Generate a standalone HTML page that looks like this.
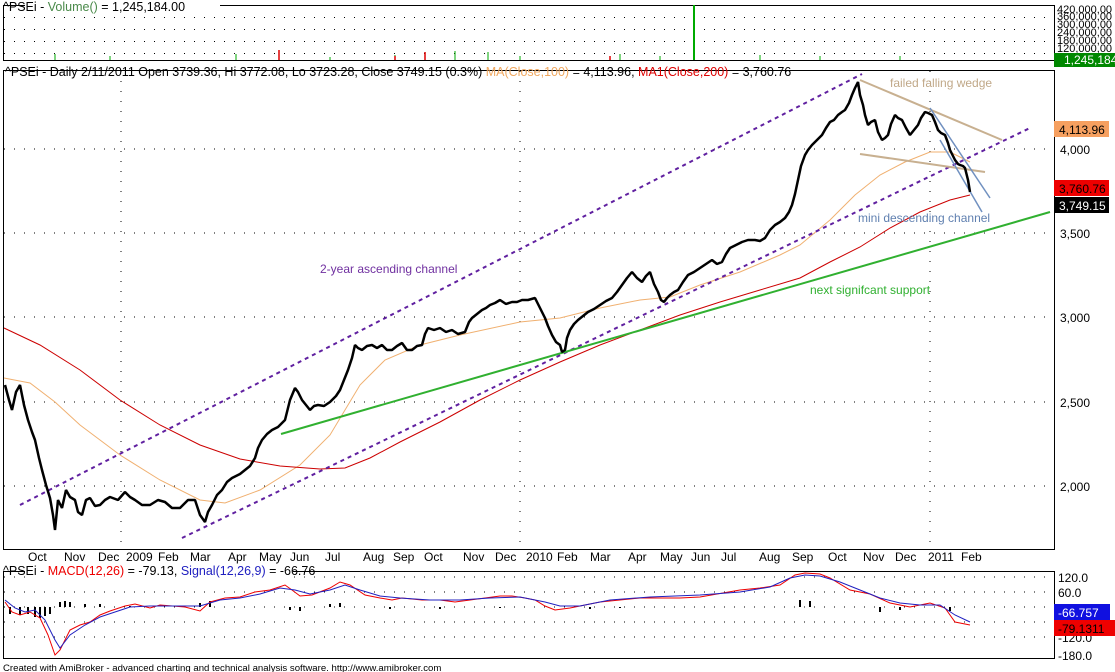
<!DOCTYPE html>
<html><head><meta charset="utf-8"><style>
html,body{margin:0;padding:0;background:#fff;}
body{width:1115px;height:672px;overflow:hidden;position:relative;font-family:"Liberation Sans",Arial,sans-serif;}
svg{position:absolute;left:0;top:0;}
text{font-family:"Liberation Sans",Arial,sans-serif;font-size:12px;}
</style></head><body>
<svg width="1115" height="672" viewBox="0 0 1115 672">
<defs>
<pattern id="dots" width="10" height="12" patternUnits="userSpaceOnUse"><rect x="4" y="5" width="1" height="1" fill="#000"/></pattern>
</defs>
<rect x="3" y="5" width="1051" height="55" fill="url(#dots)"/>
<rect x="3.5" y="5.5" width="1051" height="55" fill="none" stroke="#000"/>
<g stroke="#0a0" stroke-width="1">
<line x1="55" y1="60" x2="55" y2="54"/><line x1="110" y1="60" x2="110" y2="56"/><line x1="236" y1="60" x2="236" y2="54"/><line x1="330" y1="60" x2="330" y2="57"/><line x1="395" y1="60" x2="395" y2="55"/><line x1="455" y1="60" x2="455" y2="51"/><line x1="488" y1="60" x2="488" y2="52"/><line x1="520" y1="60" x2="520" y2="56"/><line x1="620" y1="60" x2="620" y2="54"/><line x1="660" y1="60" x2="660" y2="56"/><line x1="760" y1="60" x2="760" y2="55"/><line x1="820" y1="60" x2="820" y2="56"/><line x1="900" y1="60" x2="900" y2="56"/>
</g>
<line x1="694" y1="60" x2="694" y2="5" stroke="#0a0" stroke-width="2"/>
<g stroke="#d00" stroke-width="1.5"><line x1="279" y1="60" x2="279" y2="50"/><line x1="425" y1="60" x2="425" y2="52"/><line x1="395" y1="60" x2="395" y2="56"/><line x1="610" y1="60" x2="610" y2="56"/></g>
<rect x="25" y="0" width="195" height="12" fill="#fff"/>
<text x="3" y="11" fill="#000" style="font-size:12.5px">^PSEi - <tspan fill="#4a8a4a">Volume()</tspan> = 1,245,184.00</text>
<g><text x="1057" y="13" style="font-size:11px">420,000,00</text><text x="1057" y="20" style="font-size:11px">360,000,00</text><text x="1057" y="28" style="font-size:11px">300,000,00</text><text x="1057" y="36" style="font-size:11px">240,000,00</text><text x="1057" y="44" style="font-size:11px">180,000,00</text><text x="1057" y="52" style="font-size:11px">120,000,00</text></g>
<rect x="1054" y="53" width="61" height="14" fill="#080"/>
<text x="1064" y="64" fill="#fff" style="font-size:12px">1,245,184</text>

<rect x="3.5" y="70.5" width="1051" height="479" fill="none" stroke="#000"/>
<g stroke="#000" stroke-dasharray="1,9" stroke-width="1">
<line x1="4" y1="149" x2="1054" y2="149"/><line x1="4" y1="233" x2="1054" y2="233"/><line x1="4" y1="317" x2="1054" y2="317"/><line x1="4" y1="402" x2="1054" y2="402"/><line x1="4" y1="486" x2="1054" y2="486"/>
</g>
<g stroke="#000" stroke-dasharray="1,9"><line x1="121" y1="71" x2="121" y2="549"/><line x1="520" y1="71" x2="520" y2="549"/><line x1="930" y1="71" x2="930" y2="549"/></g>
<text x="5" y="76" fill="#000" style="font-size:12.5px">^PSEi - Daily 2/11/2011 Open 3739.36, Hi 3772.08, Lo 3723.28, Close 3749.15 (0.3%) <tspan fill="#f0a860">MA(Close,100)</tspan> = 4,113.96, <tspan fill="#d00">MA1(Close,200)</tspan> = 3,760.76</text>
<polyline fill="none" stroke="#f0b070" stroke-width="1" points="4,378 30,383 55,402 80,425 120,455 160,480 200,500 225,503 260,490 300,465 330,435 360,385 385,360 420,345 460,335 520,322 560,318 600,308 640,300 670,297 700,285 740,272 780,255 800,245 830,220 855,195 880,175 905,162 930,152 950,152 970,162"/>
<polyline fill="none" stroke="#c00" stroke-width="1" points="4,328 40,345 80,370 120,400 160,425 200,445 240,459 280,466 320,469 345,468 370,458 400,442 440,422 480,400 520,380 560,362 600,345 640,330 680,315 720,302 760,290 800,278 830,262 860,247 890,228 920,212 950,200 970,195"/>
<g stroke="#6020a0" stroke-width="2" stroke-dasharray="4,4">
<line x1="20" y1="505" x2="862" y2="74"/>
<line x1="182" y1="538" x2="1030" y2="128"/>
</g>
<line x1="281" y1="434" x2="1050" y2="212" stroke="#30b030" stroke-width="2"/>
<g stroke="#c8b090" stroke-width="2"><line x1="860" y1="80" x2="1002" y2="140"/><line x1="860" y1="154" x2="985" y2="172"/></g>
<g stroke="#7090c0" stroke-width="1.5"><line x1="930" y1="108" x2="990" y2="198"/><line x1="940" y1="140" x2="982" y2="212"/></g>
<polyline fill="none" stroke="#000" stroke-width="2.5" stroke-linejoin="bevel" points="5,385 9,400 12,410 16,392 20,385 24,405 28,420 32,432 35,440 39,458 42,470 46,485 50,498 53,515 55,530 58,500 62,508 66,490 70,497 75,500 78,512 82,515 86,500 90,498 95,506 100,505 105,500 110,497 118,500 125,492 130,497 135,500 142,505 150,505 158,500 165,502 172,508 180,508 188,500 195,500 200,515 205,522 208,512 212,505 217,495 222,490 227,482 232,478 240,474 245,470 250,466 255,458 258,448 262,440 267,434 272,430 278,427 285,420 290,400 295,388 298,392 302,400 306,405 310,410 314,406 318,405 324,406 330,402 336,396 340,390 344,380 348,370 352,358 355,345 358,348 362,350 367,346 372,345 377,348 382,345 387,350 392,350 397,346 402,343 407,350 412,350 417,346 422,345 425,334 428,328 434,330 440,328 446,332 452,330 458,334 465,332 469,322 472,318 477,314 482,310 486,308 490,305 495,303 500,300 506,304 512,302 517,302 522,300 528,300 535,298 540,308 545,318 548,326 552,335 556,342 560,345 562,352 565,350 567,338 570,330 574,324 578,320 583,316 588,312 594,309 600,305 606,301 612,298 617,292 622,285 627,278 632,272 637,278 642,282 646,276 650,272 654,284 658,292 661,300 664,302 667,298 670,295 674,292 678,290 683,282 688,275 694,272 700,268 706,264 712,260 717,264 722,262 726,254 730,248 736,245 742,242 748,240 755,240 760,241 765,238 770,230 775,225 780,222 785,218 789,212 792,205 795,194 798,180 801,166 805,155 808,150 812,145 817,140 822,135 826,128 830,122 834,120 838,115 842,112 845,110 849,103 852,95 855,88 858,82 860,95 863,105 865,115 868,125 871,122 875,120 878,132 882,140 885,138 888,135 891,124 895,115 898,118 902,120 906,128 910,135 914,130 918,125 921,118 925,112 928,113 932,115 935,122 938,130 941,133 945,135 948,143 950,150 953,156 955,160 958,164 960,165 963,166 965,168 968,180 970,192"/>
<rect x="1054" y="121" width="55" height="16" fill="#f6a060"/>
<text x="1059" y="134" fill="#000" style="font-size:12px">4,113.96</text>
<text x="1060" y="154" fill="#000" style="font-size:12px">4,000</text>
<rect x="1054" y="180" width="55" height="16" fill="#e00"/>
<text x="1059" y="193" fill="#000" style="font-size:12px">3,760.76</text>
<rect x="1054" y="197" width="55" height="16" fill="#000"/>
<text x="1059" y="210" fill="#fff" style="font-size:12px">3,749.15</text>
<g fill="#000" style="font-size:12px"><text x="1060" y="238">3,500</text><text x="1060" y="322">3,000</text><text x="1060" y="407">2,500</text><text x="1060" y="491">2,000</text></g>
<text x="320" y="273" fill="#7030a0" style="font-size:12px">2-year ascending channel</text>
<text x="810" y="294" fill="#30b030" style="font-size:12px">next signifcant support</text>
<text x="858" y="222" fill="#6080b0" style="font-size:12px">mini descending channel</text>
<text x="890" y="87" fill="#c0a888" style="font-size:12px">failed falling wedge</text>
<g fill="#000" style="font-size:12.5px">
<text x="28" y="561">Oct</text><text x="64" y="561">Nov</text><text x="98" y="561">Dec</text><text x="126" y="561">2009</text><text x="158" y="561">Feb</text><text x="190" y="561">Mar</text><text x="228" y="561">Apr</text><text x="259" y="561">May</text><text x="290" y="561">Jun</text><text x="325" y="561">Jul</text><text x="363" y="561">Aug</text><text x="393" y="561">Sep</text><text x="424" y="561">Oct</text><text x="463" y="561">Nov</text><text x="495" y="561">Dec</text><text x="526" y="561">2010</text><text x="557" y="561">Feb</text><text x="590" y="561">Mar</text><text x="628" y="561">Apr</text><text x="660" y="561">May</text><text x="691" y="561">Jun</text><text x="721" y="561">Jul</text><text x="759" y="561">Aug</text><text x="792" y="561">Sep</text><text x="828" y="561">Oct</text><text x="863" y="561">Nov</text><text x="895" y="561">Dec</text><text x="928" y="561">2011</text><text x="961" y="561">Feb</text>
</g>
<rect x="3.5" y="571.5" width="1051" height="87" fill="none" stroke="#000"/>
<g stroke="#000" stroke-dasharray="1,9"><line x1="4" y1="577" x2="1054" y2="577"/><line x1="4" y1="592" x2="1054" y2="592"/><line x1="4" y1="607" x2="1054" y2="607"/><line x1="4" y1="622" x2="1054" y2="622"/><line x1="4" y1="637" x2="1054" y2="637"/></g>
<path d="M10,607 V614 M20,607V615 M28,607V614 M35,607V617 M40,607V618 M45,607V616 M50,607V614 M60,607V602 M65,607V601 M70,607V602 M85,607V604 M100,607V604 M130,607V606 M200,607V603 M210,607V601 M290,607V610 M300,607V611 M330,607V604 M340,607V603 M390,607V609 M440,607V609 M500,607V608 M590,607V609 M620,607V608 M800,607V600 M810,607V601 M880,607V612 M900,607V610 M950,607V611" stroke="#000" stroke-width="2"/>
<polyline fill="none" stroke="#e00" stroke-width="1" points="5,602 12,612 20,615 30,612 40,618 48,635 55,655 60,650 70,630 80,625 90,622 100,615 110,611 125,606 135,604 150,608 160,605 185,607 200,611 210,602 225,598 240,597 255,592 270,590 285,585 292,590 300,596 312,595 330,588 340,582 350,585 365,595 380,598 392,600 402,598 422,600 440,600 455,602 470,600 500,596 512,596 525,598 535,600 545,606 555,610 570,608 600,602 640,598 680,598 700,597 740,590 760,588 780,585 795,575 805,573 820,574 830,578 850,590 870,594 890,603 910,607 930,603 945,608 955,622 970,625"/>
<polyline fill="none" stroke="#2020c0" stroke-width="1" points="5,600 15,608 25,612 35,610 45,620 55,640 60,648 70,635 85,625 100,617 115,612 130,607 150,606 175,606 200,606 220,600 240,598 260,594 280,588 295,590 310,594 330,590 345,585 360,590 380,596 400,598 430,600 460,600 490,598 520,597 545,602 560,606 580,606 610,600 650,597 700,595 740,592 770,587 790,578 805,575 820,576 840,582 860,590 880,598 900,603 920,605 940,605 955,615 970,622"/>
<rect x="25" y="566" width="268" height="12" fill="#fff"/>
<text x="3" y="575" fill="#000" style="font-size:12.5px">^PSEi - <tspan fill="#e00">MACD(12,26)</tspan> = -79.13, <tspan fill="#2020c0">Signal(12,26,9)</tspan> = -66.76</text>
<g fill="#000" style="font-size:12px"><text x="1058" y="582">120.0</text><text x="1058" y="597">60.0</text><text x="1058" y="642">-120.0</text><text x="1058" y="660">-180.0</text></g>
<rect x="1054" y="604" width="56" height="16" fill="#1010e0"/>
<text x="1058" y="617" fill="#fff" style="font-size:12px">-66.757</text>
<rect x="1054" y="620" width="61" height="16" fill="#e00"/>
<text x="1058" y="633" fill="#000" style="font-size:12px">-79.1311</text>
<text x="3" y="671" fill="#000" style="font-size:9.6px">Created with AmiBroker - advanced charting and technical analysis software. http://www.amibroker.com</text>
</svg>
</body></html>
